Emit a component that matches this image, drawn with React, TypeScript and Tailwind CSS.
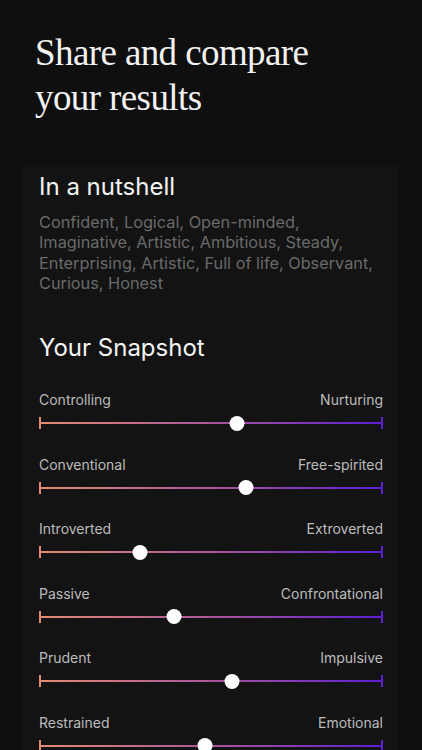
import type { JSX } from "react";

interface Trait {
  left: string;
  right: string;
  value: number;
}

const traits: readonly Trait[] = [
  { left: "Controlling", right: "Nurturing", value: 0.576 },
  { left: "Conventional", right: "Free-spirited", value: 0.602 },
  { left: "Introverted", right: "Extroverted", value: 0.294 },
  { left: "Passive", right: "Confrontational", value: 0.392 },
  { left: "Prudent", right: "Impulsive", value: 0.561 },
  { left: "Restrained", right: "Emotional", value: 0.483 },
];

const summary =
  "Confident, Logical, Open-minded, Imaginative, Artistic, Ambitious, Steady, Enterprising, Artistic, Full of life, Observant, Curious, Honest";

export default function App(): JSX.Element {
  return (
    <div className="h-[750px] w-full overflow-hidden bg-[#0f0f0f] font-['Inter',sans-serif]">
      <h1 className="pl-[35px] pt-[30px] font-['Liberation_Serif',serif] text-[37px] leading-[45px] tracking-[-0.6px] text-[#f2f2f2]">
        Share and compare
        <br />
        your results
      </h1>

      <section className="mx-[23px] mt-[46px] bg-[#131313] px-4 pt-[6px] pb-10">
        <h2 className="text-[24px] leading-[30px] text-[#f4f4f4]">
          In a nutshell
        </h2>
        <p className="mt-[10px] pr-1 text-[16.3px] leading-[20.3px] text-[#6a6a6a]">
          {summary}
        </p>

        <h2 className="mt-10 text-[24px] leading-[30px] text-[#f4f4f4]">
          Your Snapshot
        </h2>

        <ul className="mt-[27px] flex flex-col gap-[24.5px]">
          {traits.map((trait) => (
            <TraitSlider key={trait.left} trait={trait} />
          ))}
        </ul>
      </section>
    </div>
  );
}

function TraitSlider({ trait }: { trait: Trait }): JSX.Element {
  return (
    <li className="flex flex-col gap-[6px]">
      <div className="flex justify-between text-[14px] leading-5 text-[#bcbcbc]">
        <span>{trait.left}</span>
        <span>{trait.right}</span>
      </div>
      <div className="relative flex h-[14px] items-center">
        <span className="h-[12px] w-[2px] bg-[#e48a72]" />
        <span className="h-[2px] flex-1 bg-[linear-gradient(to_right,#e48a72,#a4519f_55%,#5b1fd4)]" />
        <span className="h-[12px] w-[2px] bg-[#5b1fd4]" />
        {/* thumb sits over the track */}
        <span
          className="absolute h-[15px] w-[15px] -translate-x-1/2 rounded-full bg-white"
          style={{ left: `${trait.value * 100}%` }}
        />
      </div>
    </li>
  );
}
